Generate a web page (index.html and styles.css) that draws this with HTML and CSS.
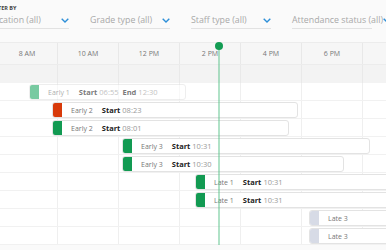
FILE: index.html
```html
<!DOCTYPE html>
<html lang="en">
<head>
    <meta charset="UTF-8">
    <meta name="viewport" content="width=device-width, initial-scale=1.0">
    <title>Attendance Timeline</title>
    <link rel="stylesheet" href="styles.css">
</head>
<body>

    <div class="filters">
        <div class="filter-label">Filter by</div>
        <div class="filter-row">
            <div class="select">
                <span>Location (all)</span>
                <svg class="chevron" viewBox="0 0 8 5"><path d="M0.7 0.7 L4 4 L7.3 0.7"/></svg>
            </div>
            <div class="select">
                <span>Grade type (all)</span>
                <svg class="chevron" viewBox="0 0 8 5"><path d="M0.7 0.7 L4 4 L7.3 0.7"/></svg>
            </div>
            <div class="select">
                <span>Staff type (all)</span>
                <svg class="chevron" viewBox="0 0 8 5"><path d="M0.7 0.7 L4 4 L7.3 0.7"/></svg>
            </div>
            <div class="select">
                <span>Attendance status (all)</span>
                <svg class="chevron" viewBox="0 0 8 5"><path d="M0.7 0.7 L4 4 L7.3 0.7"/></svg>
            </div>
        </div>
    </div>

    <div class="timeline">
        <div class="time-head">
            <div class="hour">8 AM</div>
            <div class="hour">10 AM</div>
            <div class="hour">12 PM</div>
            <div class="hour">2 PM</div>
            <div class="hour">4 PM</div>
            <div class="hour">6 PM</div>
            <div class="hour"></div>
        </div>
        <div class="sub-head"></div>

        <div class="rows">
            <div class="row">
                <div class="shift faded" style="margin-left:32px;width:157px">
                    <span class="block pale"></span>
                    <span class="shift-name">Early 1</span>
                    <b>Start</b><span class="time">06:55</span>
                    <b>End</b><span class="time">12:30</span>
                </div>
            </div>
            <div class="row">
                <div class="shift" style="margin-left:55px;width:246px">
                    <span class="block red"></span>
                    <span class="shift-name">Early 2</span>
                    <b>Start</b><span class="time">08:23</span>
                </div>
            </div>
            <div class="row">
                <div class="shift" style="margin-left:55px;width:237px">
                    <span class="block green"></span>
                    <span class="shift-name">Early 2</span>
                    <b>Start</b><span class="time">08:01</span>
                </div>
            </div>
            <div class="row">
                <div class="shift" style="margin-left:125px;width:248px">
                    <span class="block green"></span>
                    <span class="shift-name">Early 3</span>
                    <b>Start</b><span class="time">10:31</span>
                </div>
            </div>
            <div class="row">
                <div class="shift" style="margin-left:125px;width:222px">
                    <span class="block green"></span>
                    <span class="shift-name">Early 3</span>
                    <b>Start</b><span class="time">10:30</span>
                </div>
            </div>
            <div class="row">
                <div class="shift" style="margin-left:198px;width:250px">
                    <span class="block green"></span>
                    <span class="shift-name">Late 1</span>
                    <b>Start</b><span class="time">10:31</span>
                </div>
            </div>
            <div class="row">
                <div class="shift" style="margin-left:198px;width:250px">
                    <span class="block green"></span>
                    <span class="shift-name">Late 1</span>
                    <b>Start</b><span class="time">10:31</span>
                </div>
            </div>
            <div class="row">
                <div class="shift" style="margin-left:312px;width:150px">
                    <span class="block grey"></span>
                    <span class="shift-name">Late 3</span>
                </div>
            </div>
            <div class="row">
                <div class="shift" style="margin-left:312px;width:150px">
                    <span class="block grey"></span>
                    <span class="shift-name">Late 3</span>
                </div>
            </div>
        </div>

        <!-- current time marker -->
        <div class="now-line" style="left:221px"></div>
    </div>

</body>
</html>
```

FILE: styles.css
```css
body {
    font-family: 'Open Sans', 'Liberation Sans', sans-serif;
    background: #fafafa;
    margin: 0;
    width: 386px;
    height: 250px;
    overflow: hidden;
}
.filters {
    margin-left: -11px;
    padding-top: 4px;
    height: 42px;
    box-sizing: border-box;
}
.filter-label {
    font-size: 5.5px;
    font-weight: bold;
    text-transform: uppercase;
    color: #444;
    padding-left: 1px;
    height: 8px;
    line-height: 8px;
}
.filter-row {
    display: flex;
    gap: 21px;
}
.select {
    width: 80px;
    flex: none;
    display: flex;
    align-items: center;
    justify-content: space-between;
    height: 16px;
    border-bottom: 1px solid #e2e2e2;
    font-size: 8.8px;
    color: #a8a8a8;
    white-space: nowrap;
}
.chevron {
    width: 8px;
    height: 5px;
    flex: none;
}
.chevron path {
    fill: none;
    stroke: #2d8fd8;
    stroke-width: 1.4;
}
.timeline {
    position: relative;
    margin-left: -3px;
    width: 427px;
}
.time-head {
    display: flex;
    height: 21px;
    background: #f6f6f6;
    border-top: 1px solid #ececec;
    border-bottom: 1px solid #ececec;
}
.hour {
    width: 61px;
    flex: none;
    box-sizing: border-box;
    border-right: 1px solid #e8e8e8;
    text-align: center;
    line-height: 22px;
    font-size: 7px;
    color: #777;
}
.sub-head {
    height: 18px;
    background-color: #f3f3f3;
    background-image: repeating-linear-gradient(to right, transparent 0 60px, #e9e9e9 60px 61px);
}
.rows {
    background-color: #fff;
    background-image: repeating-linear-gradient(to right, transparent 0 60px, #efefef 60px 61px);
}
.row {
    height: 18px;
    box-sizing: border-box;
    border-bottom: 1px solid #f1f1f1;
    padding-top: 1px;
    display: flex;
}
.shift {
    flex: none;
    display: flex;
    align-items: center;
    height: 16px;
    box-sizing: border-box;
    background: #fff;
    border: 1px solid #e3e3e3;
    border-radius: 3px;
    white-space: nowrap;
    overflow: hidden;
}
.shift.faded {
    opacity: 0.6;
}
.block {
    width: 10px;
    height: 16px;
    margin: -1px 9px -1px -1px;
    border-radius: 2px 0 0 2px;
    flex: none;
}
.block.green { background: #129a52; }
.block.pale { background: #1fa763; }
.block.red { background: #d83a0a; }
.block.grey { background: #d7dbe6; }
.shift-name {
    font-size: 7px;
    color: #777;
    margin-right: 9px;
}
.shift b {
    font-size: 7.5px;
    color: #222;
    margin-right: 2px;
}
.time {
    font-size: 7.5px;
    color: #999;
    margin-right: 4px;
}
.now-line {
    position: absolute;
    top: 4px;
    bottom: 0;
    width: 1.5px;
    background: rgba(80, 190, 130, 0.45);
}
.now-line::before {
    content: '';
    position: absolute;
    top: -4px;
    left: -3.25px;
    width: 8px;
    height: 8px;
    border-radius: 50%;
    background: #139c53;
}
```
